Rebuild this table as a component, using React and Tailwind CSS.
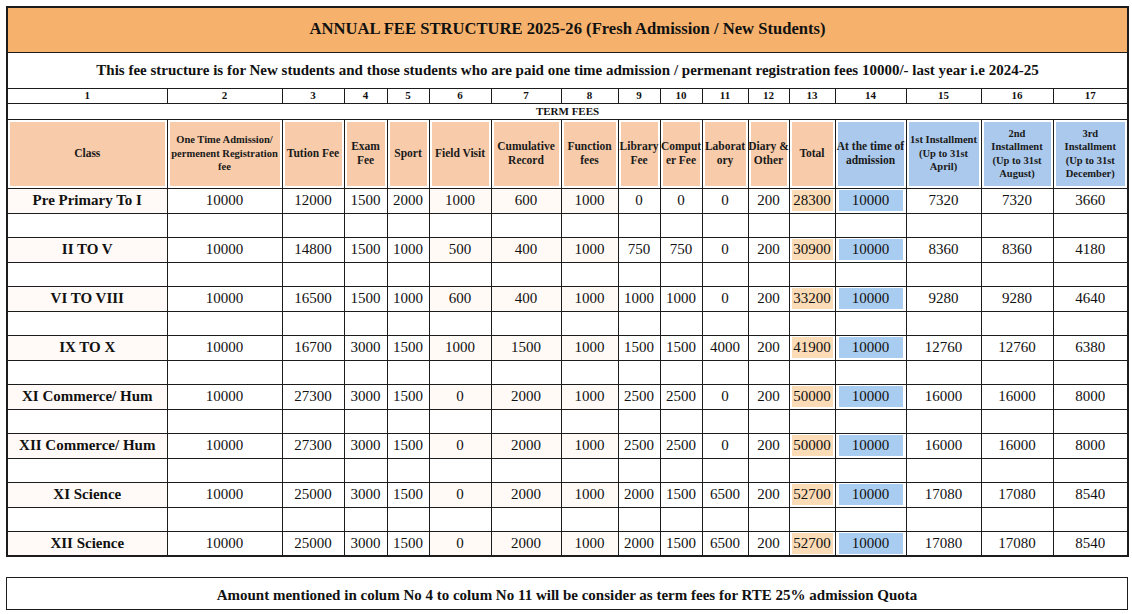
import React from "react";

const widths = [160, 115, 62, 43, 42, 62, 70, 57, 42, 42, 46, 41, 46, 71, 75, 72, 75];

const headers = [
  ["Class"],
  ["One Time Admission/", "permenent Registration", "fee"],
  ["Tution Fee"],
  ["Exam", "Fee"],
  ["Sport"],
  ["Field Visit"],
  ["Cumulative", "Record"],
  ["Function", "fees"],
  ["Library", "Fee"],
  ["Comput", "er Fee"],
  ["Laborat", "ory"],
  ["Diary &", "Other"],
  ["Total"],
  ["At the time of", "admission"],
  ["1st Installment", "(Up to 31st", "April)"],
  ["2nd", "Installment", "(Up to 31st", "August)"],
  ["3rd", "Installment", "(Up to 31st", "December)"],
];

const rows = [
  ["Pre Primary To I", 10000, 12000, 1500, 2000, 1000, 600, 1000, 0, 0, 0, 200, 28300, 10000, 7320, 7320, 3660],
  ["II TO V", 10000, 14800, 1500, 1000, 500, 400, 1000, 750, 750, 0, 200, 30900, 10000, 8360, 8360, 4180],
  ["VI TO VIII", 10000, 16500, 1500, 1000, 600, 400, 1000, 1000, 1000, 0, 200, 33200, 10000, 9280, 9280, 4640],
  ["IX TO X", 10000, 16700, 3000, 1500, 1000, 1500, 1000, 1500, 1500, 4000, 200, 41900, 10000, 12760, 12760, 6380],
  ["XI Commerce/ Hum", 10000, 27300, 3000, 1500, 0, 2000, 1000, 2500, 2500, 0, 200, 50000, 10000, 16000, 16000, 8000],
  ["XII Commerce/ Hum", 10000, 27300, 3000, 1500, 0, 2000, 1000, 2500, 2500, 0, 200, 50000, 10000, 16000, 16000, 8000],
  ["XI Science", 10000, 25000, 3000, 1500, 0, 2000, 1000, 2000, 1500, 6500, 200, 52700, 10000, 17080, 17080, 8540],
  ["XII Science", 10000, 25000, 3000, 1500, 0, 2000, 1000, 2000, 1500, 6500, 200, 52700, 10000, 17080, 17080, 8540],
];

const cell = "border border-[#1c1c1c] p-0";

function HeaderCell({ lines, idx }) {
  const blue = idx >= 13;
  const size = idx === 1 || idx >= 14 ? "text-[10.5px]" : "text-[11.5px]";
  return (
    <td className={cell + " h-[68px]"}>
      <div
        className={
          "mx-[2px] my-[2px] h-[64px] flex flex-col items-center justify-center text-center leading-[13.5px] font-bold text-[#1a1a1a] overflow-visible " +
          size +
          " " +
          (blue ? "bg-[#abc9ec]" : "bg-[#f8ccaa]")
        }
      >
        {lines.map((l, i) => (
          <span key={i} className="whitespace-nowrap">
            {l}
          </span>
        ))}
      </div>
    </td>
  );
}

function DataRow({ row }) {
  return (
    <tr>
      {row.map((v, i) => {
        if (i === 0) {
          return (
            <td key={i} className={cell + " h-[25px] text-center text-[15px] font-bold text-[#111] bg-[#fffaf7]"}>
              {v}
            </td>
          );
        }
        if (i === 12) {
          return (
            <td key={i} className={cell + " h-[25px]"}>
              <div className="mx-[2px] h-[21px] bg-[#fcdcb6] flex items-center justify-center text-[15px] text-[#111]">{v}</div>
            </td>
          );
        }
        if (i === 13) {
          return (
            <td key={i} className={cell + " h-[25px]"}>
              <div className="mx-[3px] h-[21px] bg-[#a9cdf0] flex items-center justify-center text-[15px] text-[#111]">{v}</div>
            </td>
          );
        }
        const tint = i >= 5 && i <= 7 ? " bg-[#fffaf6]" : "";
        return (
          <td key={i} className={cell + " h-[25px] text-center text-[15px] text-[#111] leading-none" + tint}>
            {v}
          </td>
        );
      })}
    </tr>
  );
}

function BlankRow() {
  return (
    <tr>
      {widths.map((_, i) => (
        <td key={i} className={cell + " h-[24px]"}></td>
      ))}
    </tr>
  );
}

export default function App() {
  return (
    <div className="w-[1132px] h-[614px] bg-white pl-[6px] pt-[6px]" style={{ fontFamily: '"Liberation Serif", "Times New Roman", serif' }}>
      <table className="table-fixed border-collapse border-2 border-[#1c1c1c] w-[1121px]">
        <colgroup>
          {widths.map((w, i) => (
            <col key={i} style={{ width: w }} />
          ))}
        </colgroup>
        <tbody>
          <tr>
            <td colSpan={17} className={cell + " h-[45px] bg-[#f6b26c] text-center text-[16.6px] font-bold text-[#111]"}>
              ANNUAL FEE STRUCTURE 2025-26 (Fresh Admission / New Students)
            </td>
          </tr>
          <tr>
            <td colSpan={17} className={cell + " h-[36px] text-center text-[15px] font-bold text-[#111]"}>
              This fee structure is for New students and those students who are paid one time admission / permenant registration fees 10000/- last year i.e 2024-25
            </td>
          </tr>
          <tr>
            {widths.map((_, i) => (
              <td key={i} className={cell + " h-[15px] text-center text-[11px] font-bold leading-none text-[#111]"}>
                {i + 1}
              </td>
            ))}
          </tr>
          <tr>
            <td colSpan={17} className={cell + " h-[16px] text-center text-[11px] font-bold leading-none text-[#111]"}>
              TERM FEES
            </td>
          </tr>
          <tr>
            {headers.map((h, i) => (
              <HeaderCell key={i} lines={h} idx={i} />
            ))}
          </tr>
          {rows.map((r, i) => (
            <React.Fragment key={i}>
              <DataRow row={r} />
              {i < rows.length - 1 && <BlankRow />}
            </React.Fragment>
          ))}
        </tbody>
      </table>
      <div className="mt-[20px] w-[1122px] h-[33px] border-[1.5px] border-[#1c1c1c] flex items-end justify-center pb-[3px] text-[15px] font-bold text-[#111]">
        Amount mentioned in colum No 4 to colum No 11 will be consider as term fees for RTE 25% admission Quota
      </div>
    </div>
  );
}
